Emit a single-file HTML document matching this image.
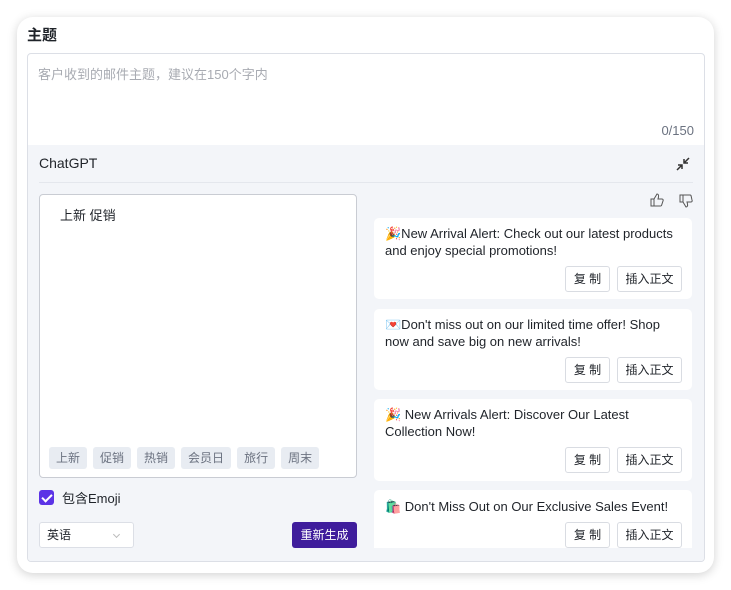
<!DOCTYPE html>
<html><head><meta charset="utf-8"><style>
*{box-sizing:border-box;margin:0;padding:0}
body{width:731px;height:590px;background:#fff;font-family:"Liberation Sans","Noto Sans CJK SC",sans-serif;position:relative;overflow:hidden;color:#1f2329}
.card{position:absolute;left:17px;top:17px;width:697px;height:556px;border-radius:16px;background:#fff;box-shadow:0 2px 10px rgba(0,0,0,.18)}
.title{position:absolute;left:27px;top:24px;font-size:15px;font-weight:bold}
.box{position:absolute;left:27px;top:53px;width:678px;height:509px;border:1px solid #dcdfe6;border-radius:4px;overflow:hidden}
.ph{position:absolute;left:10px;top:10px;font-size:13px;color:#a8abb2}
.cnt{position:absolute;right:10px;top:69px;font-size:13px;color:#6b7280}
.gray{position:absolute;left:0;top:91px;width:100%;height:420px;background:#f3f5f9}
.hd{position:absolute;left:11px;top:10px;font-size:14px;color:#1f2329}
.sep{position:absolute;left:11px;right:11px;top:37px;height:1px;background:#e4e7ed}
.inp{position:absolute;left:11px;top:49px;width:318px;height:284px;background:#fff;border:1px solid #c9ccd3;border-radius:4px}
.inp .t{position:absolute;left:20px;top:10px;font-size:13px}
.tags{position:absolute;left:9px;top:252px;display:flex;gap:6px}
.tags span{background:#e8ecf2;color:#6b7280;font-size:12px;padding:0 7px;height:22px;line-height:22px;border-radius:3px}
.chk{position:absolute;left:11px;top:343px;font-size:13px;display:flex;align-items:center;gap:8px}
.chk i{width:15px;height:15px;background:#5b33e6;border-radius:3px;display:inline-block;position:relative}
.chk i:after{content:"";position:absolute;left:5px;top:2px;width:4px;height:8px;border:solid #fff;border-width:0 2px 2px 0;transform:rotate(45deg)}
.sel{position:absolute;left:11px;top:377px;width:95px;height:26px;background:#fff;border:1px solid #dcdfe6;border-radius:3px;font-size:12px;line-height:24px;padding-left:7px}
.sel:after{content:"";position:absolute;right:14px;top:9px;width:4px;height:4px;border:solid #bbb;border-width:0 1px 1px 0;transform:rotate(45deg)}
.btn{position:absolute;left:264px;top:377px;width:65px;height:26px;background:#3f1d9c;color:#fff;font-size:12px;text-align:center;line-height:26px;border-radius:3px}
.res{position:absolute;left:346px;width:318px;background:#fff;border-radius:5px}
.res p{position:absolute;left:11px;top:7px;right:10px;font-size:13px;line-height:17px;color:#1f2329}
.b{position:absolute;top:48px;height:26px;border:1px solid #d9dce2;border-radius:3px;background:#fff;font-size:12px;line-height:24px;text-align:center}
.b1{left:191px;width:45px}.b2{left:243px;width:65px}
.ic{position:absolute;top:49px;font-size:14px;color:#555}
</style></head><body>
<div class="card"></div>
<div class="title">主题</div>
<div class="box">
<div class="ph">客户收到的邮件主题，建议在150个字内</div>
<div class="cnt">0/150</div>
<div class="gray">
<div class="hd">ChatGPT</div>
<svg style="position:absolute;left:646px;top:10px" width="18" height="18" viewBox="0 0 18 18" fill="none" stroke="#333" stroke-width="1.5"><path d="M3 15L8 10M4 10H8V14M15 3L10 8M10 4V8H14"/></svg>
<div class="sep"></div>
<div class="inp"><div class="t">上新 促销</div>
<div class="tags"><span>上新</span><span>促销</span><span>热销</span><span>会员日</span><span>旅行</span><span>周末</span></div></div>
<div class="chk"><i></i>包含Emoji</div>
<div class="sel">英语</div>
<div class="btn">重新生成</div>
<svg style="position:absolute;left:622px;top:48px" width="14" height="14" viewBox="0 0 14 14" fill="none" stroke="#555" stroke-width="1"><path d="M1 6h3v7H1zM4 6l3-5c1 0 2 1 1.5 3L8 6h4c1 0 1.5 1 1 2l-1.5 4.5c-.3.5-.6.5-1 .5H4"/></svg>
<svg style="position:absolute;left:651px;top:49px" width="14" height="14" viewBox="0 0 14 14" fill="none" stroke="#555" stroke-width="1"><path d="M1 1h3v7H1zM4 1h7c.4 0 .7 0 1 .5L13 6c.5 1 0 2-1 2H8l.5 2c.5 2-.5 3-1.5 3L4 8"/></svg>
<div class="res" style="top:73px;height:81px"><p>🎉New Arrival Alert: Check out our latest products and enjoy special promotions!</p><div class="b b1">复 制</div><div class="b b2">插入正文</div></div>
<div class="res" style="top:164px;height:81px"><p>💌Don't miss out on our limited time offer! Shop now and save big on new arrivals!</p><div class="b b1">复 制</div><div class="b b2">插入正文</div></div>
<div class="res" style="top:254px;height:82px"><p>🎉 New Arrivals Alert: Discover Our Latest Collection Now!</p><div class="b b1">复 制</div><div class="b b2">插入正文</div></div>
<div class="res" style="top:345px;height:58px;border-radius:5px 5px 0 0"><p style="top:8px">🛍️ Don't Miss Out on Our Exclusive Sales Event!</p><div class="b b1" style="top:32px">复 制</div><div class="b b2" style="top:32px">插入正文</div></div>
</div>
</div>
</body></html>
